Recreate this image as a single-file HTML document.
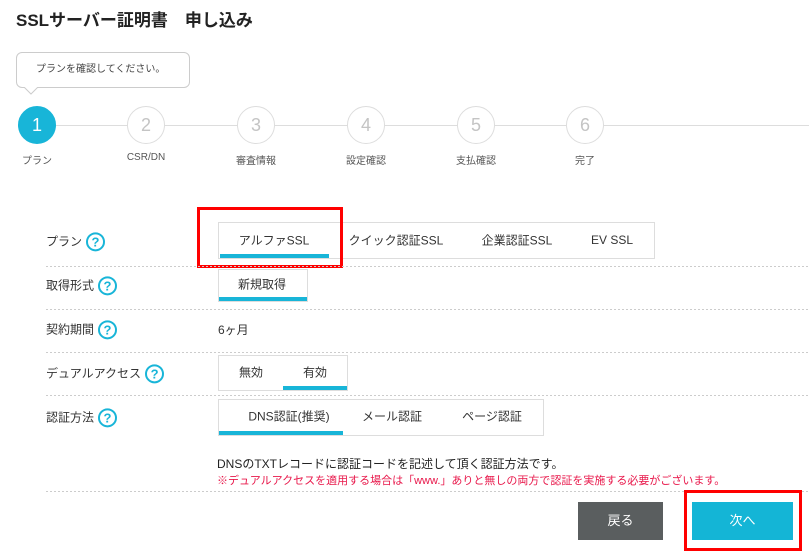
<!DOCTYPE html>
<html><head><meta charset="utf-8"><style>
*{margin:0;padding:0;box-sizing:border-box}
body{width:809px;height:559px;background:#fff;position:relative;overflow:hidden;font-family:"Liberation Sans","Noto Sans CJK JP",sans-serif;color:#333}
.a{position:absolute;white-space:nowrap}
.c{position:absolute;width:38px;height:38px;border-radius:50%;border:1px solid #ddd;background:#fff;color:#c4c4c4;font-size:18px;text-align:center;line-height:36px;top:106px}
.ln{position:absolute;height:1px;background:#ddd;top:125px}
.sl{position:absolute;font-size:10px;color:#555;top:152px;transform:translateX(-50%)}
.lb{position:absolute;left:46px;font-size:12px;color:#333;transform:translateY(-50%)}
.q{display:inline-block;width:19px;height:19px;border:2px solid #18b5d8;border-radius:50%;color:#18b5d8;font-size:13px;font-weight:bold;text-align:center;line-height:15px;vertical-align:middle;margin-left:4px}
.sep{position:absolute;left:46px;right:0;height:1px;background:repeating-linear-gradient(90deg,#ccc 0 2px,transparent 2px 4px)}
.box{position:absolute;border:1px solid #ddd;background:#fff}
.t{position:absolute;font-size:12px;transform:translate(-50%,-50%);white-space:nowrap}
.u{position:absolute;height:4px;background:#18b5d8}
.red{position:absolute;border:3px solid #f00}
</style></head><body>
<div class="a" style="left:16px;top:6px;font-size:17px;font-weight:bold;color:#222">SSLサーバー証明書　申し込み</div>
<div class="a" style="left:16px;top:52px;width:174px;height:36px;border:1px solid #ccc;border-radius:6px;font-size:10px;color:#444;line-height:34px;padding-left:19px">プランを確認してください。</div>
<svg class="a" style="left:24px;top:87px" width="16" height="8"><path d="M0 0 L7 7 L14 0" fill="#fff" stroke="#ccc"/></svg>
<div class="ln" style="left:56px;right:0"></div>
<div class="c" style="left:18px;background:#18b5d8;border-color:#18b5d8;color:#fff">1</div>
<div class="c" style="left:127px">2</div>
<div class="c" style="left:237px">3</div>
<div class="c" style="left:347px">4</div>
<div class="c" style="left:457px">5</div>
<div class="c" style="left:566px">6</div>
<div class="sl" style="left:37px">プラン</div>
<div class="sl" style="left:146px">CSR/DN</div>
<div class="sl" style="left:256px">審査情報</div>
<div class="sl" style="left:366px">設定確認</div>
<div class="sl" style="left:476px">支払確認</div>
<div class="sl" style="left:585px">完了</div>

<div class="lb" style="top:242px">プラン<span class="q">?</span></div>
<div class="box" style="left:218px;top:222px;width:437px;height:37px"></div>
<div class="t" style="left:274px;top:240px">アルファSSL</div>
<div class="t" style="left:396px;top:240px">クイック認証SSL</div>
<div class="t" style="left:517px;top:240px">企業認証SSL</div>
<div class="t" style="left:612px;top:240px">EV SSL</div>
<div class="u" style="left:220px;top:254px;width:109px"></div>
<div class="red" style="left:197px;top:207px;width:146px;height:61px"></div>
<div class="sep" style="top:266px"></div>

<div class="lb" style="top:286px">取得形式<span class="q">?</span></div>
<div class="box" style="left:218px;top:269px;width:90px;height:33px"></div>
<div class="t" style="left:262px;top:284px">新規取得</div>
<div class="u" style="left:219px;top:297px;width:88px"></div>
<div class="sep" style="top:309px"></div>

<div class="lb" style="top:330px">契約期間<span class="q">?</span></div>
<div class="a" style="left:218px;top:321px;font-size:12px">6ヶ月</div>
<div class="sep" style="top:352px"></div>

<div class="lb" style="top:374px">デュアルアクセス<span class="q">?</span></div>
<div class="box" style="left:218px;top:355px;width:130px;height:36px"></div>
<div class="t" style="left:251px;top:372px">無効</div>
<div class="t" style="left:315px;top:372px">有効</div>
<div class="u" style="left:283px;top:386px;width:64px"></div>
<div class="sep" style="top:395px"></div>

<div class="lb" style="top:418px">認証方法<span class="q">?</span></div>
<div class="box" style="left:218px;top:399px;width:326px;height:37px"></div>
<div class="t" style="left:289px;top:416px">DNS認証(推奨)</div>
<div class="t" style="left:392px;top:416px">メール認証</div>
<div class="t" style="left:492px;top:416px">ページ認証</div>
<div class="u" style="left:219px;top:431px;width:124px"></div>

<div class="a" style="left:217px;top:455px;font-size:12px;color:#222">DNSのTXTレコードに認証コードを記述して頂く認証方法です。</div>
<div class="a" style="left:217px;top:472px;font-size:11px;color:#e8174a">※デュアルアクセスを適用する場合は「www.」ありと無しの両方で認証を実施する必要がございます。</div>
<div class="sep" style="top:491px"></div>

<div class="a" style="left:578px;top:502px;width:85px;height:38px;background:#5a5e5f;color:#fff;font-size:13px;text-align:center;line-height:38px">戻る</div>
<div class="a" style="left:692px;top:502px;width:101px;height:38px;background:#14b5d6;color:#fff;font-size:13px;text-align:center;line-height:38px">次へ</div>
<div class="red" style="left:684px;top:490px;width:118px;height:61px"></div>
</body></html>
